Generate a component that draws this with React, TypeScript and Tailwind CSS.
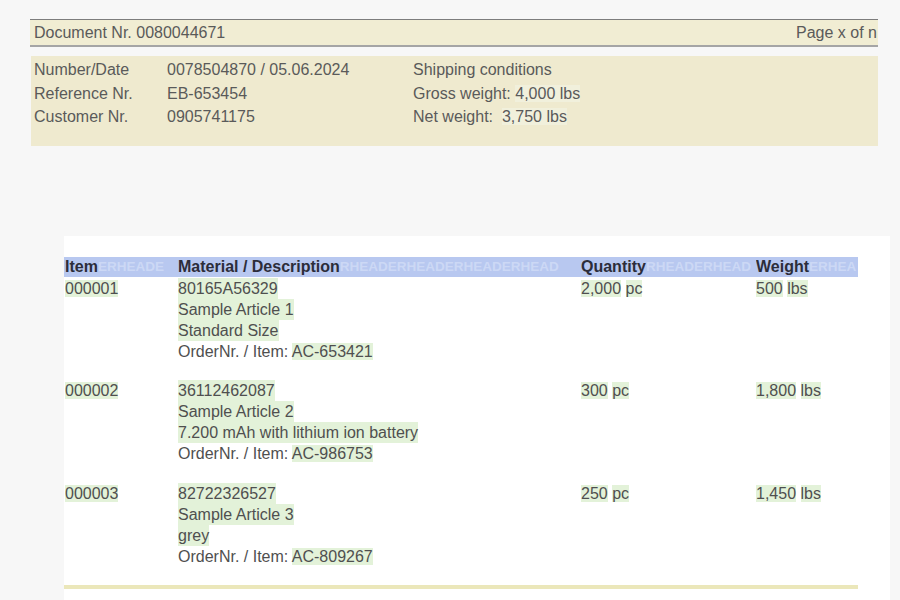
import React from "react";

const H = ({ children }: { children: React.ReactNode }) => (
  <span className="bg-[#e3f2d9]">{children}</span>
);

type Row = {
  item: string;
  mat: string;
  name: string;
  desc: string;
  order: string;
  qty: string;
  weight: string;
};

const rows: Row[] = [
  { item: "000001", mat: "80165A56329", name: "Sample Article 1", desc: "Standard Size", order: "AC-653421", qty: "2,000", weight: "500" },
  { item: "000002", mat: "36112462087", name: "Sample Article 2", desc: "7.200 mAh with lithium ion battery", order: "AC-986753", qty: "300", weight: "1,800" },
  { item: "000003", mat: "82722326527", name: "Sample Article 3", desc: "grey", order: "AC-809267", qty: "250", weight: "1,450" },
];

const HeadCell = ({
  label,
  width,
  mark,
}: {
  label: string;
  width: string;
  mark: string;
}) => (
  <div className={`${width} flex overflow-hidden`}>
    <span className="shrink-0 font-bold text-[#2c2d3a]">{label}</span>
    <div className="flex-1 overflow-hidden whitespace-nowrap text-[13.5px] font-bold text-[#ccd8f5] leading-[20px]">
      {mark}
    </div>
  </div>
);

export default function App() {
  return (
    <div
      className="w-[900px] h-[600px] overflow-hidden bg-[#f7f7f7] text-[16px] text-[#4f4f4f]"
      style={{ fontFamily: "'Liberation Sans', Arial, sans-serif" }}
    >
      <div className="pl-[30px] w-[878px] pt-[19px]">
        <div className="h-[28px] bg-[#f1edd3] border-t border-[#7d7d7d] border-b-2 border-b-[#a5a5a5] flex items-center justify-between pl-[4px] pr-[1px] text-[#5a5a5a] leading-[20px]">
          <span>Document Nr. 0080044671</span>
          <span>Page x of n</span>
        </div>
        <div className="mt-[9px] h-[90px] w-[847px] ml-[1px] bg-[#efeacf] pt-[2px] pl-[3px] leading-[23.5px] text-[#5a5a5a] flex">
          <div className="w-[133px] flex flex-col">
            <span>Number/Date</span>
            <span>Reference Nr.</span>
            <span>Customer Nr.</span>
          </div>
          <div className="w-[246px] flex flex-col">
            <span>0078504870 / 05.06.2024</span>
            <span>EB-653454</span>
            <span>0905741175</span>
          </div>
          <div className="flex flex-col">
            <span>Shipping conditions</span>
            <span>
              Gross weight: <span className="bg-[#f1f0dc]">4,000 lbs</span>
            </span>
            <span>
              Net weight:&nbsp; <span className="bg-[#f1f0dc]">3,750 lbs</span>
            </span>
          </div>
        </div>
      </div>

      <div className="mt-[90px] ml-[64px] w-[826px] h-[400px] bg-white pt-[21px] pr-[32px]">
        <div className="h-[20px] bg-[#b8c8f0] overflow-hidden leading-[20px] flex pl-[1px]">
          <HeadCell label="Item" width="w-[113px]" mark="ERHEADE" />
          <HeadCell label="Material / Description" width="w-[403px]" mark="RHEADERHEADERHEADERHEAD" />
          <HeadCell label="Quantity" width="w-[175px]" mark="RHEADERHEAD" />
          <HeadCell label="Weight" width="flex-1" mark="ERHEA" />
        </div>

        <div className="leading-[21px] text-[#4f4f4f]">
          {rows.map((r) => (
            <div key={r.item} className="flex pt-[0.5px] pb-[18px] pl-[1px]">
              <div className="w-[113px]">
                <H>{r.item}</H>
              </div>
              <div className="w-[403px] flex flex-col items-start">
                <H>{r.mat}</H>
                <H>{r.name}</H>
                <H>{r.desc}</H>
                <span>
                  OrderNr. / Item: <H>{r.order}</H>
                </span>
              </div>
              <div className="w-[175px]">
                <H>{r.qty}</H> <H>pc</H>
              </div>
              <div className="flex-1">
                <H>{r.weight}</H> <H>lbs</H>
              </div>
            </div>
          ))}
        </div>
        <div className="h-[4px] bg-[#ebe7ba] mt-[0.5px]" />
      </div>
    </div>
  );
}
